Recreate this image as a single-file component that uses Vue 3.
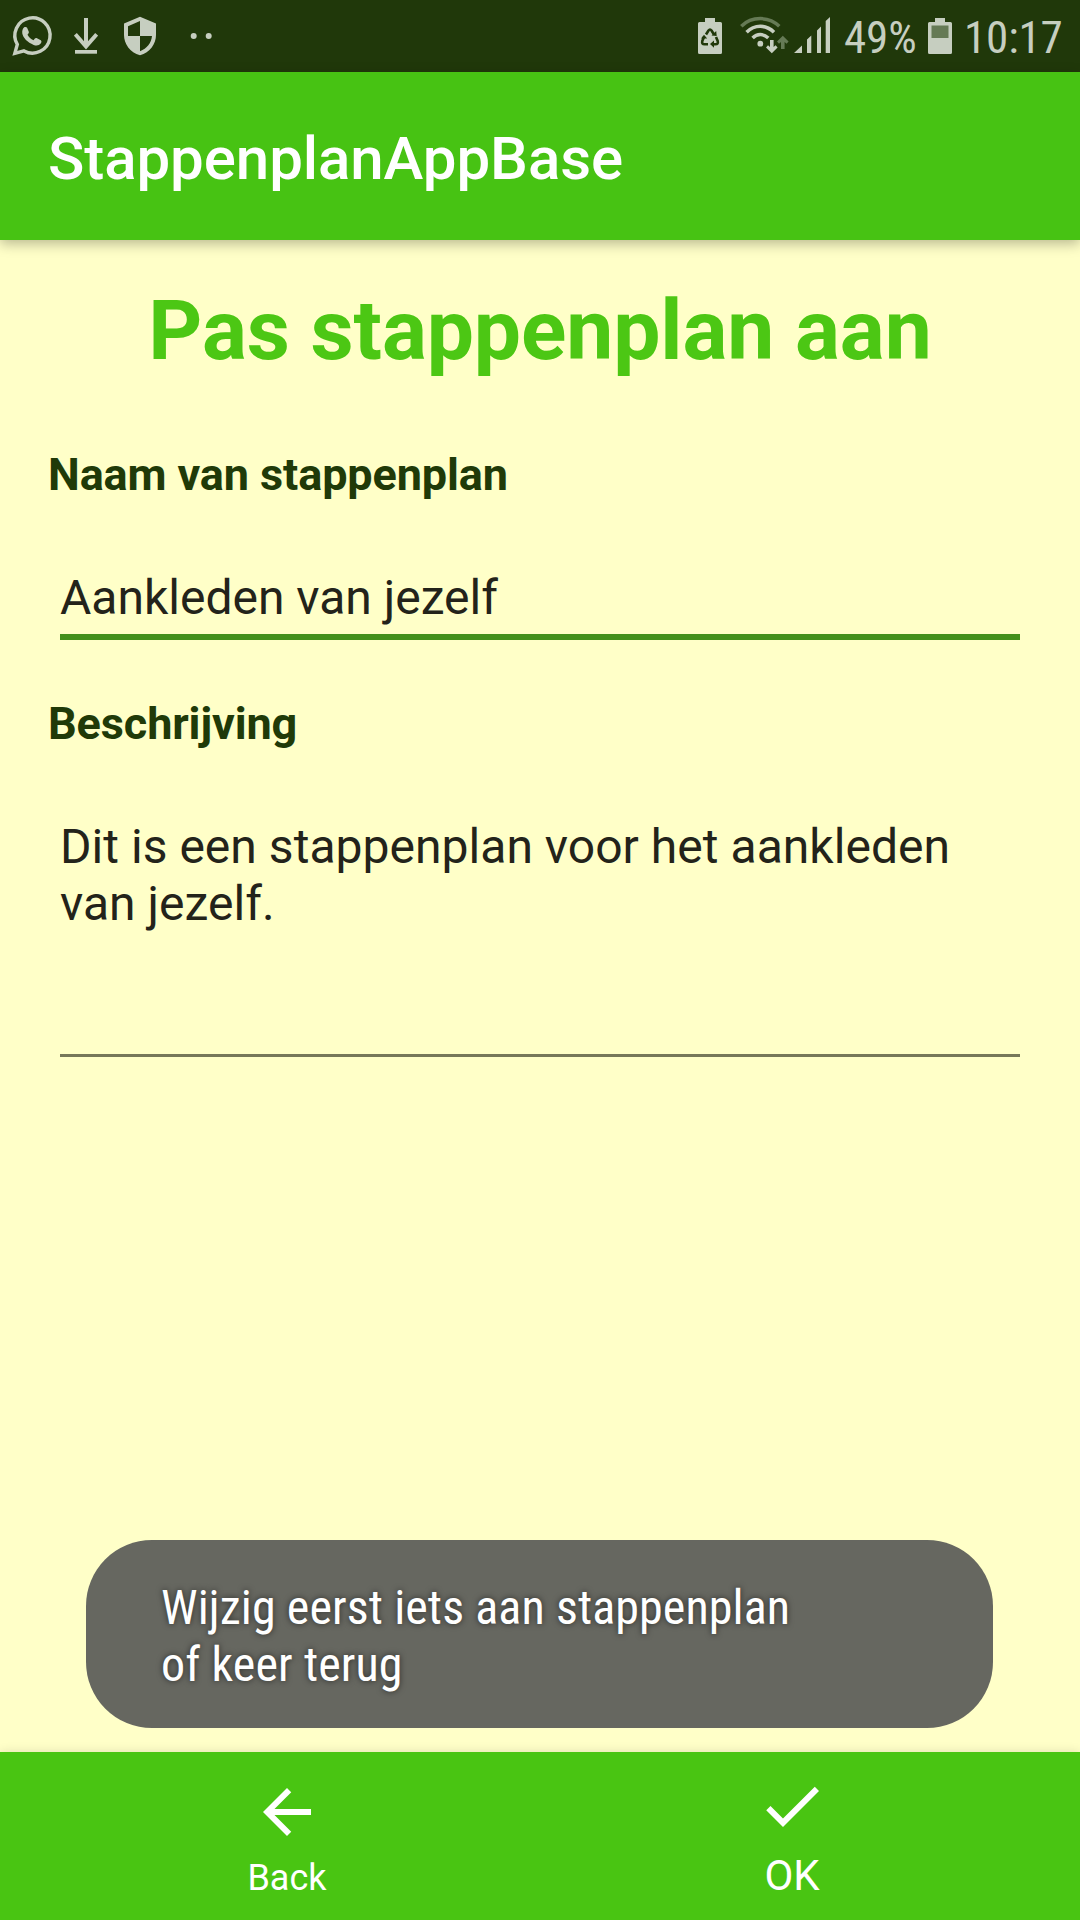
<script setup>
import { ref } from 'vue'

const naam = ref('Aankleden van jezelf')
const beschrijving = ref('Dit is een stappenplan voor het aankleden van jezelf.')
</script>

<template>
  <div class="screen">
    <div class="status">
      <svg class="whatsapp" width="44" height="44" viewBox="10 14 44 44">
        <path d="M14.800 53.400 L17.300 44.400 A17.600 17.600 0 1 1 24 50.900 Z" fill="none" stroke="currentColor" stroke-width="3.400" />
        <path d="M24.200 27.300c1-.6 2.400-.5 2.900.5l1.700 3.900c.3.800-.1 1.600-1.300 3 1.400 2.500 3.300 4.300 6 5.500 1.500-1.800 2-2.500 3-2.100l4.300 2.100c1.100.6.600 2.500-.1 3.400-1.500 1.900-4.300 2.300-7 1.300-6.200-2.200-10.700-7.100-11.400-11.300-.4-2.600.5-5.200 1.900-6.300z" fill="currentColor" />
      </svg>
      <svg class="download" width="24" height="38" viewBox="74 17 24 38">
        <path d="M86 18V46M75.300 34.300L86 46.500L96.700 34.300" fill="none" stroke="currentColor" stroke-width="4" />
        <path d="M75 50h22v3.700h-22z" fill="currentColor" />
      </svg>
      <svg class="shield" width="32" height="40" viewBox="124 16 32 40">
        <path fill-rule="evenodd" d="M140 16.800L156 23.500V35c0 9-6 17.300-16 20.300C130 52.300 124 44 124 35V23.500zM140 21L128 26.200V36H140zM140 36V51.200C147 48.500 151.300 43 152 36z" fill="currentColor" />
      </svg>
      <svg class="dots" width="22" height="8" viewBox="190 32 22 8">
        <circle cx="193.700" cy="36" r="3" fill="currentColor" />
        <circle cx="208.700" cy="36" r="3" fill="currentColor" />
      </svg>
      <span class="grow"></span>
      <svg class="saver" width="24" height="36" viewBox="698 18 24 36">
        <path d="M705 18h10v4h5.500q1.500 0 1.500 1.500v29q0 1.500-1.500 1.500h-21q-1.500 0-1.500-1.500v-29q0-1.500 1.500-1.500h5.500z" fill="currentColor" />
        <g fill="none" stroke="#20380a" stroke-width="2.600">
          <path d="M706 34.500L708.500 30.500Q710 28.500 711.500 30.500L714 34.500" />
          <path d="M704 37L702.300 41Q701.500 44.300 704.500 44.300H708" />
          <path d="M716 37L717.700 41Q718.500 44.300 715.500 44.300H712" />
        </g>
        <path d="M711.500 35.500l5.200.500-.5-5zM701 38.500l3-3.700 3.200 3.700zM714 40.500v7.200l-4-3.600z" fill="#20380a" />
      </svg>
      <svg class="wifi" width="49" height="38" viewBox="740 16 49 38">
        <path d="M741.300 26.300Q749 18.600 760.300 18.600T779.300 26.300" fill="none" stroke="#657a55" stroke-width="3.500" />
        <g fill="none" stroke="currentColor" stroke-width="3.500">
          <path d="M746.600 32.300Q752.500 26.300 760.300 26.300T774 32.300" />
          <path d="M752.600 38Q756 34.600 760.300 34.600T768.300 38" />
        </g>
        <circle cx="760.300" cy="43.700" r="2.900" fill="currentColor" />
        <path d="M770 40h3.600v7l2-1.800 2 2.200-5.800 5.900-5.800-5.900 2-2.200 2 1.800z" fill="currentColor" />
        <path d="M781 49h3.600v-7l2 1.800 2-2.200-5.800-5.900-5.800 5.900 2 2.200 2-1.800z" fill="#657a55" />
      </svg>
      <svg class="signal" width="36" height="37" viewBox="794 17 36 37">
        <path d="M794 53L802 45.500V53zM807 39.500L811.300 35.500V53H807zM817 30.500L821 26.500V53H817zM825.700 21L830 17V53H825.700z" fill="currentColor" />
      </svg>
      <span class="pct cond">49%</span>
      <svg class="battery" width="24" height="36" viewBox="928 18 24 36">
        <path d="M935 18h10v4h5.500q1.500 0 1.500 1.500v29q0 1.500-1.500 1.500h-21q-1.500 0-1.500-1.500v-29q0-1.500 1.500-1.500h5.500z" fill="currentColor" />
        <path d="M931.500 25.500h17V38h-17z" fill="#657a55" />
      </svg>
      <span class="time cond">10:17</span>
    </div>

    <header class="appbar">StappenplanAppBase</header>

    <main class="content">
      <h1>Pas stappenplan aan</h1>
      <div class="label first">Naam van stappenplan</div>
      <div class="field name">{{ naam }}</div>
      <div class="label second">Beschrijving</div>
      <div class="field description">{{ beschrijving }}</div>
    </main>

    <nav class="tabs">
      <div class="tab back">
        <svg width="72" height="72" viewBox="0 0 24 24"><path d="M20 11H7.830l5.590-5.590L12 4l-8 8 8 8 1.410-1.410L7.830 13H20z" fill="#fff" /></svg>
        <span>Back</span>
      </div>
      <div class="tab ok">
        <svg width="72" height="72" viewBox="0 0 24 24"><path d="M9 16.170L4.830 12l-1.420 1.410L9 19 21 7l-1.410-1.410z" fill="#fff" /></svg>
        <span>OK</span>
      </div>
    </nav>

    <div class="toast cond">Wijzig eerst iets aan stappenplan<br />of keer terug</div>
  </div>
</template>

<style>
body {
  margin: 0;
  background: #ffffc8;
}
</style>

<style scoped>
.screen {
  position: relative;
  display: flex;
  flex-direction: column;
  width: 1080px;
  height: 1920px;
  overflow: hidden;
  background: #ffffc8;
  font-family: Roboto, "Liberation Sans", sans-serif;
}
.cond {
  font-family: "Roboto Condensed", Roboto, sans-serif;
  font-stretch: 75%;
}
.status {
  display: flex;
  align-items: center;
  flex: none;
  height: 72px;
  background: #20380a;
  color: #c6cec0;
}
.status svg {
  display: block;
  flex: none;
}
.status span {
  white-space: nowrap;
}
.whatsapp { margin-left: 10px; }
.download { margin-left: 20px; }
.shield { margin-left: 26px; }
.dots { margin-left: 34px; }
.grow { flex: 1; }
.wifi { margin: 0 5px 2px 18px; }
.signal { margin-bottom: 1px; }
.pct,
.time {
  flex: none;
  font-size: 45px;
  line-height: 72px;
  letter-spacing: -0.15px;
  padding-top: 3px;
}
.pct { width: 84px; margin-left: 14px; }
.time { width: 116px; margin-left: 12px; }
.appbar {
  position: relative;
  z-index: 1;
  flex: none;
  box-sizing: border-box;
  height: 168px;
  padding: 5px 48px 0;
  line-height: 163px;
  background: #47c313;
  box-shadow: 0 4px 12px rgba(0, 0, 0, 0.27);
  color: #fff;
  font-size: 60px;
  font-weight: 500;
  letter-spacing: -0.07px;
}
.content {
  flex: 1;
  padding: 41px 48px 0;
}
h1 {
  margin: 0;
  color: #4cc714;
  font-size: 84px;
  font-weight: 700;
  line-height: 100px;
  letter-spacing: -0.12px;
  text-align: center;
}
.label {
  color: #203a08;
  font-size: 45px;
  font-weight: 700;
  line-height: 54px;
  letter-spacing: -0.11px;
}
.first { margin-top: 67px; }
.second { margin-top: 57px; }
.field {
  margin: 67px 12px 0;
  color: #23231a;
  font-size: 48px;
  line-height: 57px;
}
.name {
  padding-bottom: 8px;
  border-bottom: 6px solid #43901c;
}
.description {
  height: 236px;
  border-bottom: 3px solid #777859;
  letter-spacing: 0.035px;
}
.tabs {
  display: flex;
  flex: none;
  justify-content: center;
  height: 168px;
  background: #49c512;
  box-shadow: 0 0 10px rgba(0, 0, 0, 0.12);
  color: #fff;
}
.tab {
  display: flex;
  flex-direction: column;
  align-items: center;
  box-sizing: border-box;
  width: 504px;
}
.tab svg {
  display: block;
}
.back {
  padding: 24px 2px 0 0;
  font-size: 36px;
  line-height: 42px;
}
.back span { margin-top: 9px; }
.ok {
  padding-top: 18px;
  font-size: 42px;
  line-height: 48px;
}
.ok span { margin-top: 10px; }
.toast {
  position: absolute;
  left: 86px;
  top: 1540px;
  box-sizing: border-box;
  width: 907px;
  height: 188px;
  padding: 39px 75px 0;
  border-radius: 66px;
  background: #666760;
  color: #fff;
  font-size: 48px;
  line-height: 57px;
  letter-spacing: 0.1px;
  text-shadow: 0 0 6px rgba(0, 0, 0, 0.6);
  white-space: nowrap;
}
</style>
